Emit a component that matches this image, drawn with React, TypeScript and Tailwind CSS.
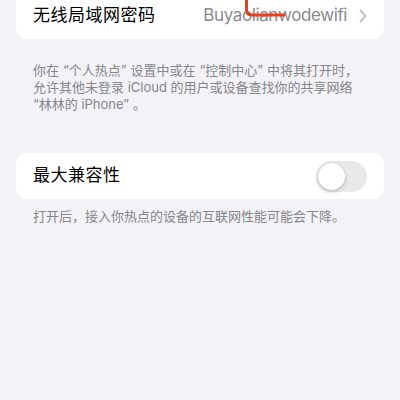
const font = { fontFamily: 'Inter, "Noto Sans CJK SC", sans-serif' };

// 中文引号：左引号前、右引号后留一点空隙
function L() {
  return <span className="pl-[4px]">“</span>;
}
function R() {
  return <span className="pr-[4px]">”</span>;
}

function Toggle() {
  // 关闭状态的开关
  return (
    <div className="w-[51px] h-[31px] rounded-full bg-[#e9e9eb] p-[2px] flex items-center">
      <div className="w-[27px] h-[27px] rounded-full bg-white shadow-[0_2px_4px_rgba(0,0,0,0.18),0_0_1px_rgba(0,0,0,0.2)]" />
    </div>
  );
}

export default function App() {
  return (
    <div style={font} className="relative w-[400px] h-[400px] overflow-hidden bg-[#f2f2f7]">
      {/* 无线局域网密码 */}
      <div className="mx-4 -mt-[7px] h-[46px] bg-white rounded-[10px] flex items-center pl-[17px] pr-[17px]">
        <span className="text-[17px] text-black tracking-[0.5px]">无线局域网密码</span>
        <span className="ml-auto text-[17px] text-[#8a8a8e] tracking-[-0.4px]">Buyaolianwodewifi</span>
        <svg className="ml-[12px]" width="8" height="14" viewBox="0 0 8 14">
          <path d="M1.5 1.5 L6.5 7 L1.5 12.5" fill="none" stroke="#c4c4c7" strokeWidth="2" strokeLinecap="round" strokeLinejoin="round" />
        </svg>
      </div>

      <div className="mx-4 mt-[23px] pl-[17px] text-[13px] leading-[17px] text-[#86868b] whitespace-nowrap">
        <div>
          你在<L />个人热点<R />设置中或在<L />控制中心<R />中将其打开时，
        </div>
        <div>允许其他未登录 iCloud 的用户或设备查找你的共享网络</div>
        <div>
          <span>“</span>林林的 iPhone<R />。
        </div>
      </div>

      {/* 最大兼容性 */}
      <div className="mx-4 mt-[40px] h-[46px] bg-white rounded-[10px] flex items-center pl-[17px] pr-[17px]">
        <span className="text-[17px] text-black tracking-[0.5px]">最大兼容性</span>
        <div className="ml-auto">
          <Toggle />
        </div>
      </div>

      <p className="mx-4 mt-[9px] px-[17px] text-[13px] leading-[17px] text-[#86868b]">
        打开后，接入你热点的设备的互联网性能可能会下降。
      </p>

      {/* 红色标注 */}
      <svg className="absolute left-0 top-0 pointer-events-none" width="400" height="30">
        <path d="M246.5 0 L246.5 10 Q246.5 15 252 15 L284 15" fill="none" stroke="#e8401c" strokeWidth="3" strokeLinecap="round" />
      </svg>
    </div>
  );
}
